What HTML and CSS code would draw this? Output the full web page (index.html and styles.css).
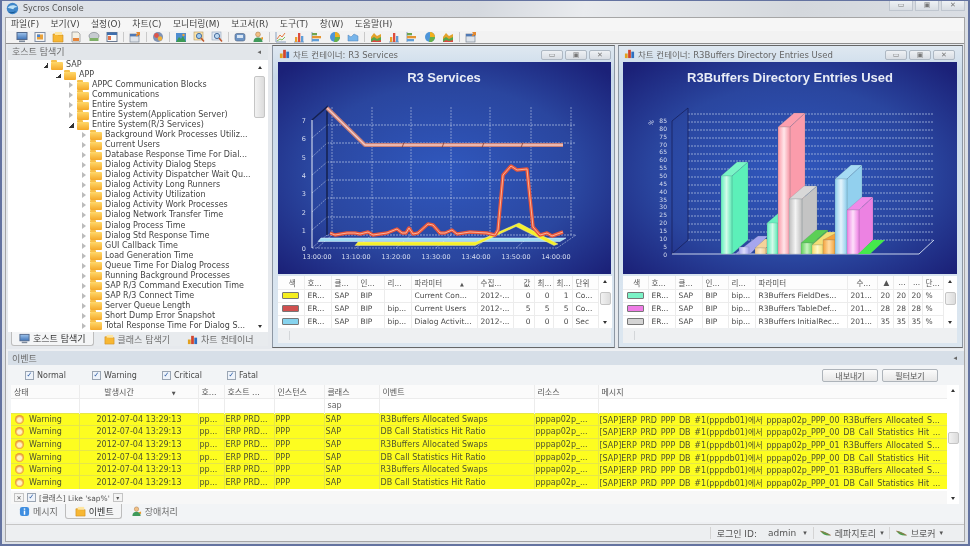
FILE: index.html
```html
<!DOCTYPE html>
<html lang="ko">
<head>
<meta charset="utf-8">
<title>Sycros Console</title>
<link rel="stylesheet" href="styles.css">
</head>
<body>
<svg class="defs" width="0" height="0">
  <defs>
    <linearGradient id="gBlue" x1="0" y1="0" x2="0" y2="1"><stop offset="0" stop-color="#9fc4ec"/><stop offset="1" stop-color="#3f74b8"/></linearGradient>
    <symbol id="i-mon" viewBox="0 0 12 12"><rect x="1" y="1.5" width="10" height="7" fill="url(#gBlue)" stroke="#52698c"/><rect x="3" y="9.5" width="6" height="1.6" fill="#7d8a9b"/></symbol>
    <symbol id="i-win" viewBox="0 0 12 12"><rect x="1" y="1.5" width="10" height="9" fill="#f5f5f5" stroke="#7f8da3"/><rect x="3" y="3.5" width="6" height="5" fill="#e8a23c"/><rect x="3" y="3.5" width="3" height="2.5" fill="#4c86cf"/></symbol>
    <symbol id="i-fold" viewBox="0 0 12 12"><path d="M1 3h4l1 1h5v7H1z" fill="#f7b733" stroke="#c98a1c" stroke-width=".6"/><path d="M3 1h7v3H3z" fill="#ffe6a0"/></symbol>
    <symbol id="i-doc" viewBox="0 0 12 12"><path d="M2 1h6l2 2v8H2z" fill="#f3f0e4" stroke="#8c8c8c" stroke-width=".7"/><path d="M3 7h6v3H3z" fill="#e6853a"/></symbol>
    <symbol id="i-drive" viewBox="0 0 12 12"><ellipse cx="6" cy="5" rx="5" ry="3.6" fill="#c7cbd1" stroke="#7f858e" stroke-width=".7"/><rect x="1.5" y="7" width="9" height="3" fill="#7fb069"/></symbol>
    <symbol id="i-tab" viewBox="0 0 12 12"><rect x="1" y="1.5" width="10" height="9" fill="#fafafa" stroke="#6b7a91"/><rect x="1" y="1.5" width="10" height="2.5" fill="#3f6fae"/><rect x="2" y="5" width="3" height="4" fill="#e0714a"/></symbol>
    <symbol id="i-open" viewBox="0 0 12 12"><rect x="1" y="3" width="9" height="8" fill="#dfe4ea" stroke="#7c8796" stroke-width=".7"/><rect x="1" y="3" width="9" height="2.4" fill="#4f79b4"/><path d="M7 1l4 0 0 4-1.2-1.2L8 5.5 6.6 4.2l1.7-1.8z" fill="#e6892d"/></symbol>
    <symbol id="i-gear" viewBox="0 0 12 12"><circle cx="6" cy="6" r="5" fill="#7f93b5"/><circle cx="4.5" cy="4.5" r="2.4" fill="#e0564a"/><circle cx="8" cy="7.5" r="2.2" fill="#f2b13b"/></symbol>
    <symbol id="i-mount" viewBox="0 0 12 12"><rect x="1" y="2" width="10" height="9" fill="#4f8ed0"/><path d="M1 11l3-5 2 2 2-3 3 6z" fill="#3c9a55"/><circle cx="8.5" cy="4" r="1.2" fill="#f0a33a"/></symbol>
    <symbol id="i-zoom" viewBox="0 0 12 12"><rect x="1" y="1" width="9" height="8" fill="#fbe3a9" stroke="#b59b66" stroke-width=".6"/><circle cx="6" cy="5" r="2.6" fill="#9ecbf0" stroke="#4b6f9c"/><path d="M8 7l3 3.4" stroke="#c2572c" stroke-width="1.5"/></symbol>
    <symbol id="i-zoom2" viewBox="0 0 12 12"><rect x="1" y="1" width="9" height="8" fill="#dce6f3" stroke="#93a3b8" stroke-width=".6"/><circle cx="6" cy="5" r="2.6" fill="#bcd8f3" stroke="#4b6f9c"/><path d="M8 7l3 3.4" stroke="#c2572c" stroke-width="1.5"/></symbol>
    <symbol id="i-disk" viewBox="0 0 12 12"><rect x="1" y="2.5" width="10" height="7.5" rx="2" fill="#6d94c4" stroke="#4a5f80" stroke-width=".6"/><rect x="3" y="4" width="6" height="3" fill="#d8e6f5"/></symbol>
    <symbol id="i-info" viewBox="0 0 12 12"><rect x="1" y="1" width="10" height="10" rx="2.500" fill="#3f8ee0"/><rect x="5.200" y="5" width="1.600" height="4.500" fill="#fff"/><rect x="5.200" y="2.600" width="1.600" height="1.500" fill="#fff"/></symbol>
    <symbol id="i-user" viewBox="0 0 12 12"><circle cx="6" cy="3.4" r="2.4" fill="#f2c085" stroke="#a5713a" stroke-width=".5"/><path d="M1.5 11c0-3.4 2-4.6 4.5-4.6s4.500 1.200 4.500 4.600z" fill="#3f9a5b"/><path d="M8 7l3-1v3z" fill="#e69a2c"/></symbol>
    <symbol id="i-line" viewBox="0 0 12 12"><path d="M1 1v10h10" fill="none" stroke="#8aa0bf"/><path d="M2 8l3-4 2 2 3-4" fill="none" stroke="#e5793f"/><path d="M2 10l3-2 2 1 3-3" fill="none" stroke="#7fc05a"/></symbol>
    <symbol id="i-bar" viewBox="0 0 12 12"><path d="M1 11h10" stroke="#8aa0bf"/><rect x="2" y="6" width="2.300" height="5" fill="#eb9e2b"/><rect x="5" y="2" width="2.300" height="9" fill="#dd4c3d"/><rect x="8" y="5" width="2.300" height="6" fill="#5f9ed8"/></symbol>
    <symbol id="i-hbar" viewBox="0 0 12 12"><path d="M1 1v10" stroke="#8aa0bf"/><rect x="1" y="2" width="5" height="2.300" fill="#6ea54f"/><rect x="1" y="5" width="9" height="2.300" fill="#e59431"/><rect x="1" y="8" width="7" height="2.300" fill="#5f9ed8"/></symbol>
    <symbol id="i-pie" viewBox="0 0 12 12"><circle cx="6" cy="6" r="5" fill="#4d95d9"/><path d="M6 6V1a5 5 0 0 1 5 5z" fill="#f2b01e"/><path d="M6 6h5a5 5 0 0 1-6 5z" fill="#67b24a"/></symbol>
    <symbol id="i-area" viewBox="0 0 12 12"><path d="M1 10V4l3 2 3-3 4 2v5z" fill="#78b5ea" stroke="#4b7fb7" stroke-width=".5"/></symbol>
    <symbol id="i-area2" viewBox="0 0 12 12"><path d="M1 11V6l3-4 3 3 4-2v8z" fill="#e3a22b"/><path d="M1 11V8l3-2 3 2 4-2v5z" fill="#55a64b"/><path d="M1 11l3-2 3 1 4-1v2z" fill="#d94a43"/></symbol>
    <symbol id="i-app" viewBox="0 0 16 16"><circle cx="8" cy="8" r="7" fill="#3f86c9"/><path d="M2 7c3-4 9-4 12-1-3 0-4 1-5 3-2-1-4-1-7-2z" fill="#bfe3f7"/><path d="M3 12c3 1 6 1 9-1-1 3-7 4-9 1z" fill="#16568f"/></symbol>
    <symbol id="i-leaf" viewBox="0 0 14 8"><path d="M1 1c4 0 8 2 12 5-5 1-9-1-12-5z" fill="#48a04b"/><path d="M1 1c4 2 8 3 12 5" stroke="#c65a4a" stroke-width=".7" fill="none"/></symbol>
    <symbol id="i-chart" viewBox="0 0 12 12"><rect x="1" y="6" width="3" height="5" fill="#e2a11f"/><rect x="4.500" y="2" width="3" height="9" fill="#d2452f"/><rect x="8" y="4" width="3" height="7" fill="#2f6fc0"/></symbol>
    <radialGradient id="bg1" cx=".5" cy=".52" r=".68"><stop offset="0" stop-color="#3058be"/><stop offset=".6" stop-color="#2a469f"/><stop offset="1" stop-color="#1b2178"/></radialGradient>
    <linearGradient id="mint" x1="0" x2="1" y1="0" y2="0"><stop offset="0" stop-color="#5ff0bd"/><stop offset=".5" stop-color="#d3fbe9"/><stop offset="1" stop-color="#59e8b3"/></linearGradient>
    <linearGradient id="pink" x1="0" x2="1" y1="0" y2="0"><stop offset="0" stop-color="#fb98a6"/><stop offset=".5" stop-color="#ffe6ea"/><stop offset="1" stop-color="#f894a3"/></linearGradient>
    <linearGradient id="grey" x1="0" x2="1" y1="0" y2="0"><stop offset="0" stop-color="#bdbdbd"/><stop offset=".5" stop-color="#f4f4f4"/><stop offset="1" stop-color="#bdbdbd"/></linearGradient>
    <linearGradient id="blue" x1="0" x2="1" y1="0" y2="0"><stop offset="0" stop-color="#8ccdec"/><stop offset=".5" stop-color="#e3f4fc"/><stop offset="1" stop-color="#8ccdec"/></linearGradient>
    <linearGradient id="mag" x1="0" x2="1" y1="0" y2="0"><stop offset="0" stop-color="#ee7fe4"/><stop offset=".5" stop-color="#fde0fa"/><stop offset="1" stop-color="#ee7fe4"/></linearGradient>
    <linearGradient id="grn" x1="0" x2="1" y1="0" y2="0"><stop offset="0" stop-color="#5fd059"/><stop offset=".5" stop-color="#c9f3c1"/><stop offset="1" stop-color="#5fd059"/></linearGradient>
    <linearGradient id="yel" x1="0" x2="1" y1="0" y2="0"><stop offset="0" stop-color="#f6dc6b"/><stop offset=".5" stop-color="#fff8c8"/><stop offset="1" stop-color="#f6dc6b"/></linearGradient>
    <linearGradient id="org" x1="0" x2="1" y1="0" y2="0"><stop offset="0" stop-color="#f4a33c"/><stop offset=".5" stop-color="#ffdca4"/><stop offset="1" stop-color="#f4a33c"/></linearGradient>
    <linearGradient id="pale" x1="0" x2="1" y1="0" y2="0"><stop offset="0" stop-color="#f0c98a"/><stop offset=".5" stop-color="#fbe8c6"/><stop offset="1" stop-color="#f0c98a"/></linearGradient>
    <linearGradient id="lav" x1="0" x2="1" y1="0" y2="0"><stop offset="0" stop-color="#a6a6ee"/><stop offset=".5" stop-color="#dcdcfa"/><stop offset="1" stop-color="#a6a6ee"/></linearGradient>
  </defs>
</svg>

<div class="app">
  <header class="titlebar">
    <div class="app-title"><svg class="ico-app"><use href="#i-app"/></svg><span>Sycros Console</span></div>
    <div class="winctl main-ctl"><span class="wb">▭</span><span class="wb">▣</span><span class="wb">✕</span></div>
  </header>

  <div class="frame">
    <nav class="menubar">
      <span>파일(F)</span><span>보기(V)</span><span>설정(O)</span><span>차트(C)</span><span>모니터링(M)</span><span>보고서(R)</span><span>도구(T)</span><span>창(W)</span><span>도움말(H)</span>
    </nav>
    <div class="toolbar">
      <svg class="ti"><use href="#i-mon"/></svg><svg class="ti"><use href="#i-win"/></svg><svg class="ti"><use href="#i-fold"/></svg><svg class="ti"><use href="#i-doc"/></svg><svg class="ti"><use href="#i-drive"/></svg><svg class="ti"><use href="#i-tab"/></svg>
      <i class="tsep"></i><svg class="ti"><use href="#i-open"/></svg>
      <i class="tsep"></i><svg class="ti"><use href="#i-gear"/></svg>
      <i class="tsep"></i><svg class="ti"><use href="#i-mount"/></svg><svg class="ti"><use href="#i-zoom"/></svg><svg class="ti"><use href="#i-zoom2"/></svg>
      <i class="tsep"></i><svg class="ti"><use href="#i-disk"/></svg><svg class="ti"><use href="#i-user"/></svg>
      <i class="tsep"></i><svg class="ti"><use href="#i-line"/></svg><svg class="ti"><use href="#i-bar"/></svg><svg class="ti"><use href="#i-hbar"/></svg><svg class="ti"><use href="#i-pie"/></svg><svg class="ti"><use href="#i-area"/></svg>
      <i class="tsep"></i><svg class="ti"><use href="#i-area2"/></svg><svg class="ti"><use href="#i-bar"/></svg><svg class="ti"><use href="#i-hbar"/></svg><svg class="ti"><use href="#i-pie"/></svg><svg class="ti"><use href="#i-area2"/></svg>
      <i class="tsep"></i><svg class="ti"><use href="#i-open"/></svg>
    </div>

    <div class="main">
      <aside class="explorer">
        <div class="panel-head"><span>호스트 탐색기</span><span class="pin">◂</span></div>
        <div class="tree-wrap">
          <ul class="tree">
            <li class="l0"><i class="tw open"></i><i class="folder"></i>SAP</li>
            <li class="l1"><i class="tw open"></i><i class="folder"></i>APP</li>
            <li class="l2"><i class="tw"></i><i class="folder"></i>APPC Communication Blocks</li>
            <li class="l2"><i class="tw"></i><i class="folder"></i>Communications</li>
            <li class="l2"><i class="tw"></i><i class="folder"></i>Entire System</li>
            <li class="l2"><i class="tw"></i><i class="folder"></i>Entire System(Application Server)</li>
            <li class="l2"><i class="tw open"></i><i class="folder"></i>Entire System(R/3 Services)</li>
            <li class="l3"><i class="tw"></i><i class="folder"></i>Background Work Processes Utiliz...</li>
            <li class="l3"><i class="tw"></i><i class="folder"></i>Current Users</li>
            <li class="l3"><i class="tw"></i><i class="folder"></i>Database Response Time For Dial...</li>
            <li class="l3"><i class="tw"></i><i class="folder"></i>Dialog Activity Dialog Steps</li>
            <li class="l3"><i class="tw"></i><i class="folder"></i>Dialog Activity Dispatcher Wait Qu...</li>
            <li class="l3"><i class="tw"></i><i class="folder"></i>Dialog Activity Long Runners</li>
            <li class="l3"><i class="tw"></i><i class="folder"></i>Dialog Activity Utilization</li>
            <li class="l3"><i class="tw"></i><i class="folder"></i>Dialog Activity Work Processes</li>
            <li class="l3"><i class="tw"></i><i class="folder"></i>Dialog Network Transfer Time</li>
            <li class="l3"><i class="tw"></i><i class="folder"></i>Dialog Process Time</li>
            <li class="l3"><i class="tw"></i><i class="folder"></i>Dialog Std Response Time</li>
            <li class="l3"><i class="tw"></i><i class="folder"></i>GUI Callback Time</li>
            <li class="l3"><i class="tw"></i><i class="folder"></i>Load Generation Time</li>
            <li class="l3"><i class="tw"></i><i class="folder"></i>Queue Time For Dialog Process</li>
            <li class="l3"><i class="tw"></i><i class="folder"></i>Running Background Processes</li>
            <li class="l3"><i class="tw"></i><i class="folder"></i>SAP R/3 Command Execution Time</li>
            <li class="l3"><i class="tw"></i><i class="folder"></i>SAP R/3 Connect Time</li>
            <li class="l3"><i class="tw"></i><i class="folder"></i>Server Queue Length</li>
            <li class="l3"><i class="tw"></i><i class="folder"></i>Short Dump Error Snapshot</li>
            <li class="l3"><i class="tw"></i><i class="folder"></i>Total Response Time For Dialog S...</li>
          </ul>
          <div class="sb sb-tree"><i class="up"></i><b class="thumb"></b><i class="down"></i></div>
        </div>
        <div class="tabs host-tabs">
          <span class="tab active"><svg class="tabi"><use href="#i-mon"/></svg>호스트 탐색기</span>
          <span class="tab"><svg class="tabi"><use href="#i-fold"/></svg>클래스 탐색기</span>
          <span class="tab"><svg class="tabi"><use href="#i-chart"/></svg>차트 컨테이너</span>
        </div>
      </aside>

      <section class="cwin cw1">
        <div class="cwin-title"><span class="ct"><svg class="ci"><use href="#i-chart"/></svg>차트 컨테이너: R3 Services</span><div class="winctl"><span class="wb">▭</span><span class="wb">▣</span><span class="wb">✕</span></div></div>
        <svg class="chart" viewBox="278 62 333 212">
          <rect x="278" y="62" width="333" height="212" fill="url(#bg1)"/>
          <text x="444" y="82" class="ctitle">R3 Services</text>
          <g class="grid-h">
            <path d="M327 125H576M327 143H576M327 162H576M327 180H576M327 198H576M327 217H576M327 235H576"/>
          </g>
          <g class="grid-v">
            <path d="M332 107V235M372 107V235M411 107V235M451 107V235M490 107V235M531 107V235M571 107V235"/>
            <path d="M312 138L327 125M312 157L327 143M312 175L327 162M312 193L327 180M312 212L327 198M312 230L327 217M312 248L327 235"/>
            <path d="M557 248L576 235M317 248L332 235M356 248L372 235M396 248L411 235M436 248L451 235M476 248L490 235M516 248L531 235"/>
            <path d="M312 248H557"/>
          </g>
          <path d="M312 120L327 107V235" class="wall"/>
          <path d="M312 120V248" class="axis"/>
          <g class="ylab"><text x="306" y="123">7</text><text x="306" y="141">6</text><text x="306" y="160">5</text><text x="306" y="178">4</text><text x="306" y="196">3</text><text x="306" y="215">2</text><text x="306" y="233">1</text><text x="306" y="251">0</text></g>
          <g class="xlab"><text x="317" y="259">13:00:00</text><text x="356" y="259">13:10:00</text><text x="396" y="259">13:20:00</text><text x="436" y="259">13:30:00</text><text x="476" y="259">13:40:00</text><text x="516" y="259">13:50:00</text><text x="556" y="259">14:00:00</text></g>
          <path d="M321 238H566L560 241.500H318z" fill="#9fdcf3" stroke="#e8f8ff" stroke-width=".5"/>
          <path d="M358 242H476L519 223L558 244L554 245.500L516 226.500L475 245.500H355z" fill="#f5f02c" stroke="#fffbb0" stroke-width=".4"/>
          <polyline class="ln-o" points="330,233 335,235 347,233 355,233 360,234 368,232 373,235 387,233 397,229 402,233 406,233 409,228 413,234 418,233 428,224 433,225 440,233 445,233 452,230 457,234 470,232 487,233 495,235 498,230 503,175 511,166 517,170 527,169 533,227 540,235 547,233 552,236 563,232"/>
          <polyline class="ln-o2" points="330,233 335,235 347,233 355,233 360,234 368,232 373,235 387,233 397,229 402,233 406,233 409,228 413,234 418,233 428,224 433,225 440,233 445,233 452,230 457,234 470,232 487,233 495,235 498,230 503,175 511,166 517,170 527,169 533,227 540,235 547,233 552,236 563,232"/>
          <polyline class="ln-p" points="327,108 365,145 563,145"/>
          <polyline class="ln-p2" points="327,108 365,145 563,145"/>
          <path d="M404 142.500l-2 5M444 142.500l-2 5M484 142.500l-2 5M523 142.500l-2 5" stroke="#7a3a3a" stroke-width=".8"/>
        </svg>
        <div class="dt">
          <table class="grid t1">
            <colgroup><col><col><col><col><col><col><col><col><col><col><col></colgroup>
            <thead><tr><th class="ctr">색</th><th>호...</th><th>클...</th><th>인...</th><th>리...</th><th>파라미터<span class="sort">▲</span></th><th>수집...</th><th class="r">값</th><th>최...</th><th>최...</th><th>단위</th></tr></thead>
            <tbody>
              <tr><td><i class="swatch s-yel"></i></td><td>ER...</td><td>SAP</td><td>BIP</td><td></td><td>Current Con...</td><td>2012-...</td><td class="r">0</td><td class="r">0</td><td class="r">1</td><td>Co...</td></tr>
              <tr><td><i class="swatch s-red"></i></td><td>ER...</td><td>SAP</td><td>BIP</td><td>bip...</td><td>Current Users</td><td>2012-...</td><td class="r">5</td><td class="r">5</td><td class="r">5</td><td>Co...</td></tr>
              <tr><td><i class="swatch s-blu"></i></td><td>ER...</td><td>SAP</td><td>BIP</td><td>bip...</td><td>Dialog Activit...</td><td>2012-...</td><td class="r">0</td><td class="r">0</td><td class="r">0</td><td>Sec</td></tr>
            </tbody>
          </table>
          <div class="sb sb-mini"><i class="up"></i><b class="thumb"></b><i class="down"></i></div>
        </div>
        <div class="cwin-foot"><i></i></div>
      </section>

      <section class="cwin cw2">
        <div class="cwin-title"><span class="ct"><svg class="ci"><use href="#i-chart"/></svg>차트 컨테이너: R3Buffers Directory Entries Used</span><div class="winctl"><span class="wb">▭</span><span class="wb">▣</span><span class="wb">✕</span></div></div>
        <svg class="chart" viewBox="623 62 334 212">
          <rect x="623" y="62" width="334" height="212" fill="url(#bg1)"/>
          <text x="790" y="82" class="ctitle">R3Buffers Directory Entries Used</text>
          <path d="M688 114H934M688 122H934M688 130H934M688 138H934M688 146H934M688 154H934M688 161H934M688 169H934M688 177H934M688 185H934M688 193H934M688 201H934M688 209H934M688 216H934M688 224H934M688 232H934M688 240H934" class="grid-d"/>
          <path d="M672 121L688 108V240L672 254z" class="wall2"/>
          <path d="M672 254H919L934 240" class="floor"/>
          <g class="ylab2">
            <text x="667" y="123">85</text><text x="667" y="131">80</text><text x="667" y="139">75</text><text x="667" y="147">70</text><text x="667" y="154">65</text><text x="667" y="162">60</text><text x="667" y="170">55</text><text x="667" y="178">50</text><text x="667" y="186">45</text><text x="667" y="194">40</text><text x="667" y="202">35</text><text x="667" y="209">30</text><text x="667" y="217">25</text><text x="667" y="225">20</text><text x="667" y="233">15</text><text x="667" y="241">10</text><text x="667" y="249">5</text><text x="667" y="257">0</text>
          </g>
          <text class="pct" transform="translate(652 126) rotate(-65)">%</text>

          <g class="bar"><polygon points="721,176 737,162 748,162 732,176" fill="#7af5c6"/><polygon points="732,176 748,162 748,240 732,254" fill="#5cf0b9"/><rect x="721" y="176" width="11" height="78" fill="url(#mint)"/></g>
          <g class="bar"><polygon points="735,254 745,246 758,236 768,236 750,254" fill="#a6a6ee"/><rect x="739" y="247" width="10" height="7" fill="url(#lav)"/></g>
          <g class="bar"><polygon points="755,248 765,239 775,239 766,248" fill="#f5d39a"/><rect x="755" y="248" width="11" height="6" fill="url(#pale)"/><polygon points="766,248 775,239 775,244 766,254" fill="#f0c98a"/></g>
          <g class="bar"><polygon points="767,223 782,210 782,254 767,254" fill="#6af0bf"/><rect x="767" y="223" width="11" height="31" fill="url(#mint)"/></g>
          <g class="bar"><polygon points="778,127 794,113 805,113 790,127" fill="#fb9fae"/><polygon points="790,127 805,113 805,240 790,254" fill="#fb9cab"/><rect x="778" y="127" width="12" height="127" fill="url(#pink)"/></g>
          <g class="bar"><polygon points="789,199 804,186 817,186 802,199" fill="#d8d8d8"/><polygon points="802,199 817,186 817,240 802,254" fill="#c4c4c4"/><rect x="789" y="199" width="13" height="55" fill="url(#grey)"/></g>
          <g class="bar"><polygon points="801,243 816,230 828,230 813,243" fill="#5ccf56"/><polygon points="813,243 828,230 828,240 813,254" fill="#57c451"/><rect x="801" y="243" width="12" height="11" fill="url(#grn)"/></g>
          <g class="bar"><polygon points="812,245 827,232 838,232 823,245" fill="#f4de77"/><rect x="812" y="245" width="11" height="9" fill="url(#yel)"/></g>
          <g class="bar"><polygon points="823,240 838,232 847,232 835,240" fill="#f4a33c"/><polygon points="835,240 847,232 847,244 835,254" fill="#f0a039"/><rect x="823" y="240" width="12" height="14" fill="url(#org)"/></g>
          <g class="bar"><polygon points="835,179 851,165 862,165 847,179" fill="#a6dbf3"/><polygon points="847,179 862,165 862,240 847,254" fill="#92d0ee"/><rect x="835" y="179" width="12" height="75" fill="url(#blue)"/></g>
          <g class="bar"><polygon points="847,210 862,197 873,197 859,210" fill="#f08ae8"/><polygon points="859,210 873,197 873,240 859,254" fill="#ec82e2"/><rect x="847" y="210" width="12" height="44" fill="url(#mag)"/></g>
          <polygon points="858,254 873,240 885,240 870,254" fill="#45e84c"/>
        </svg>
        <div class="dt">
          <table class="grid t2">
            <colgroup><col><col><col><col><col><col><col><col><col><col><col></colgroup>
            <thead><tr><th class="ctr">색</th><th>호...</th><th>클...</th><th>인...</th><th>리...</th><th>파라미터</th><th class="ctr">수...</th><th class="ctr">▲</th><th class="ctr">...</th><th class="ctr">...</th><th>단...</th></tr></thead>
            <tbody>
              <tr><td><i class="swatch s-min"></i></td><td>ER...</td><td>SAP</td><td>BIP</td><td>bip...</td><td>R3Buffers FieldDes...</td><td>201...</td><td class="r">20</td><td class="r">20</td><td class="r">20</td><td>%</td></tr>
              <tr><td><i class="swatch s-mag"></i></td><td>ER...</td><td>SAP</td><td>BIP</td><td>bip...</td><td>R3Buffers TableDef...</td><td>201...</td><td class="r">28</td><td class="r">28</td><td class="r">28</td><td>%</td></tr>
              <tr><td><i class="swatch s-gry"></i></td><td>ER...</td><td>SAP</td><td>BIP</td><td>bip...</td><td>R3Buffers InitialRec...</td><td>201...</td><td class="r">35</td><td class="r">35</td><td class="r">35</td><td>%</td></tr>
            </tbody>
          </table>
          <div class="sb sb-mini"><i class="up"></i><b class="thumb"></b><i class="down"></i></div>
        </div>
        <div class="cwin-foot"><i></i></div>
      </section>
    </div>

    <section class="events">
      <div class="panel-head ev-head"><span>이벤트</span><span class="pin">◂</span></div>
      <div class="ev-filter">
        <div class="checks">
          <label class="chk c-n"><i class="cb">✓</i>Normal</label>
          <label class="chk c-w"><i class="cb">✓</i>Warning</label>
          <label class="chk c-c"><i class="cb">✓</i>Critical</label>
          <label class="chk"><i class="cb">✓</i>Fatal</label>
        </div>
        <div class="btns"><button class="btn">내보내기</button><button class="btn">필터보기</button></div>
      </div>
      <div class="ev-body">
        <div class="ev-tablewrap">
          <table class="grid ev">
            <colgroup><col><col><col><col><col><col><col><col><col></colgroup>
            <thead>
              <tr><th>상태</th><th class="ctr">발생시간<span class="sort">▼</span></th><th>호...</th><th>호스트 ...</th><th>인스턴스</th><th>클래스</th><th>이벤트</th><th>리소스</th><th>메시지</th></tr>
              <tr class="fr"><td></td><td></td><td></td><td></td><td></td><td>sap</td><td></td><td></td><td></td></tr>
            </thead>
            <tbody>
              <tr><td><i class="warn"></i>Warning</td><td class="ctr">2012-07-04 13:29:13</td><td>pp...</td><td>ERP PRD...</td><td>PPP</td><td>SAP</td><td>R3Buffers Allocated Swaps</td><td>pppap02p_...</td><td class="msg">[SAP]ERP PRD PPP DB #1(pppdb01)에서 pppap02p_PPP_00 R3Buffers Allocated S...</td></tr>
              <tr><td><i class="warn"></i>Warning</td><td class="ctr">2012-07-04 13:29:13</td><td>pp...</td><td>ERP PRD...</td><td>PPP</td><td>SAP</td><td>DB Call Statistics Hit Ratio</td><td>pppap02p_...</td><td class="msg">[SAP]ERP PRD PPP DB #1(pppdb01)에서 pppap02p_PPP_00 DB Call Statistics Hit ...</td></tr>
              <tr><td><i class="warn"></i>Warning</td><td class="ctr">2012-07-04 13:29:13</td><td>pp...</td><td>ERP PRD...</td><td>PPP</td><td>SAP</td><td>R3Buffers Allocated Swaps</td><td>pppap02p_...</td><td class="msg">[SAP]ERP PRD PPP DB #1(pppdb01)에서 pppap02p_PPP_01 R3Buffers Allocated S...</td></tr>
              <tr><td><i class="warn"></i>Warning</td><td class="ctr">2012-07-04 13:29:13</td><td>pp...</td><td>ERP PRD...</td><td>PPP</td><td>SAP</td><td>DB Call Statistics Hit Ratio</td><td>pppap02p_...</td><td class="msg">[SAP]ERP PRD PPP DB #1(pppdb01)에서 pppap02p_PPP_00 DB Call Statistics Hit ...</td></tr>
              <tr><td><i class="warn"></i>Warning</td><td class="ctr">2012-07-04 13:29:13</td><td>pp...</td><td>ERP PRD...</td><td>PPP</td><td>SAP</td><td>R3Buffers Allocated Swaps</td><td>pppap02p_...</td><td class="msg">[SAP]ERP PRD PPP DB #1(pppdb01)에서 pppap02p_PPP_01 R3Buffers Allocated S...</td></tr>
              <tr><td><i class="warn"></i>Warning</td><td class="ctr">2012-07-04 13:29:13</td><td>pp...</td><td>ERP PRD...</td><td>PPP</td><td>SAP</td><td>DB Call Statistics Hit Ratio</td><td>pppap02p_...</td><td class="msg">[SAP]ERP PRD PPP DB #1(pppdb01)에서 pppap02p_PPP_01 DB Call Statistics Hit ...</td></tr>
            </tbody>
          </table>
          <div class="ev-expr"><span class="xbox">✕</span><i class="cb">✓</i><span>[클래스] Like 'sap%'</span><span class="dd">▾</span></div>
        </div>
        <div class="sb sb-ev"><i class="up"></i><b class="thumb"></b><i class="down"></i></div>
      </div>
      <div class="tabs ev-tabs">
        <span class="tab"><svg class="tabi"><use href="#i-info"/></svg>메시지</span>
        <span class="tab active"><svg class="tabi"><use href="#i-fold"/></svg>이벤트</span>
        <span class="tab"><svg class="tabi"><use href="#i-user"/></svg>장애처리</span>
      </div>
    </section>

    <footer class="status">
      <span class="st st-login">로그인 ID:<b>admin</b><em>▾</em></span>
      <span class="st"><svg class="leaf"><use href="#i-leaf"/></svg>레파지토리<em>▾</em></span>
      <span class="st"><svg class="leaf"><use href="#i-leaf"/></svg>브로커<em>▾</em></span>
    </footer>
  </div>
</div>
</body>
</html>
```

FILE: styles.css
```css
* { box-sizing: border-box; }
html, body { margin: 0; padding: 0; }
body {
  width: 970px; height: 546px; overflow: hidden; background: #fff;
  font-family: "DejaVu Sans", "Noto Sans CJK KR", sans-serif;
  font-size: 8px; color: #3a3a3a;
}
.defs { position: absolute; }
.app {
  width: 970px; height: 546px;
  display: flex; flex-direction: column;
  padding: 0 3px 2px;
  border: 2px solid #6473a0;
  border-top-width: 1px;
  background: linear-gradient(100deg, #dfe3e9 0%, #d5d9df 45%, #e9ebee 55%, #d4d8dd 75%, #dde1e7 100%);
  filter: blur(.4px);
}
.titlebar { height: 16px; display: flex; justify-content: space-between; align-items: flex-start; flex: none; }
.app-title { display: flex; align-items: center; gap: 4px; height: 15px; color: #555; font-size: 8px; padding-left: 1px; }
.ico-app { width: 13px; height: 13px; }
.winctl { display: flex; gap: 2px; }
.wb {
  width: 24px; height: 10px; border: 1px solid #bfc6cf; border-top: 0;
  background: linear-gradient(#eef1f4, #d8dde3);
  font-size: 7px; line-height: 9px; text-align: center; color: #777;
}
.main-ctl { margin-right: 0; }

.frame {
  flex: 1; display: flex; flex-direction: column; min-height: 0;
  border: 1px solid #a6a6a6; background: #eef0f3;
}
.menubar {
  height: 13px; flex: none; display: flex; gap: 11.400px; padding-left: 5px;
  background: #f6f6f6; font-size: 8.800px; line-height: 12px; color: #444;
}
.toolbar {
  height: 13px; flex: none; display: flex; align-items: center; gap: 6px; padding-left: 10px;
  background: #f2f2f2; border-bottom: 1px solid #8f8f8f;
}
.ti { width: 12px; height: 12px; flex: none; }
.tsep { width: 1px; height: 10px; margin: 0 -1px; background: #c9c9c9; flex: none; }

.main { height: 305px; flex: none; display: flex; gap: 3px; padding: 1px 0 0 2px; background: #e6e9ed; }
.explorer { width: 260px; margin-right: 1px; display: flex; flex-direction: column; flex: none; }
.panel-head {
  height: 15px; flex: none; display: flex; justify-content: space-between; align-items: center;
  padding: 0 7px 2px 4px; background: #e2e6ea; color: #6b6b6b; font-size: 9px;
}
.pin { font-size: 7px; color: #666; }
.tree-wrap { height: 272px; flex: none; display: flex; background: #fff; padding: 0 2px 0 2px; }
.tree { list-style: none; margin: 0; padding: 0; flex: 1; overflow: hidden; }
.tree li { height: 10.040px; line-height: 10px; display: flex; align-items: center; white-space: nowrap; color: #444; }
.l0 { padding-left: 33px; }
.l1 { padding-left: 46px; }
.l2 { padding-left: 59px; }
.l3 { padding-left: 72px; }
.tw {
  width: 0; height: 0; flex: none; margin-right: 4px;
  border-left: 4px solid #bbb; border-top: 3px solid transparent; border-bottom: 3px solid transparent;
}
.tw.open {
  margin-right: 3px; margin-left: 0; border: 0; width: 5px; height: 5px;
  background: linear-gradient(135deg, transparent 50%, #333 50%);
}
.folder {
  position: relative; flex: none; width: 12px; height: 8px; margin-right: 3px; margin-top: 1px; border-radius: 1px;
  background: linear-gradient(#ffd86a, #f4a92a);
}
.folder::before {
  content: ""; position: absolute; left: 0; top: -2px; width: 6px; height: 2px;
  background: #f6c04a; border-radius: 1px 1px 0 0;
}
.sb { width: 13px; flex: none; display: flex; flex-direction: column; align-items: center; background: #fff; }
.sb .up, .sb .down { width: 0; height: 0; flex: none; border-left: 2.500px solid transparent; border-right: 2.500px solid transparent; margin: 4px 0; }
.sb .up { border-bottom: 3px solid #333; }
.sb .down { border-top: 3px solid #333; margin-top: auto; }
.thumb { display: block; border: 1px solid #c5c5c5; border-radius: 2px; background: linear-gradient(90deg, #f2f2f2, #dcdcdc); width: 11px; }
.sb-tree .thumb { height: 42px; margin-top: 3px; }
.sb-tree .up { margin-top: 6px; }
.sb-mini { width: 13px; }
.sb-mini .thumb { height: 13px; margin-top: 5px; }
.sb-ev { width: 12px; background: #fff; }
.sb-ev .thumb { height: 12px; margin-top: 36px; }

.tabs { display: flex; flex: none; font-size: 9px; color: #6c6c6c; }
.tab { display: flex; align-items: center; gap: 3px; padding: 0 7px; }
.tab.active { background: #f4f5f6; color: #333; border: 1px solid #bdbdbd; border-top: 0; border-radius: 0 0 3px 3px; }
.tabi { width: 11px; height: 11px; flex: none; }
.host-tabs { height: 14px; background: #e8ebee; padding-left: 3px; gap: 3px; }

.cwin {
  flex: none; height: 303px; display: flex; flex-direction: column;
  border: 1px solid #8d97a3; border-top-color: #666; border-bottom-color: #666;
  background: linear-gradient(#dfe8f1, #c8d9ea 10%, #dbe6f0 90%);
}
.cw1 { width: 343px; padding: 0 3px 0 5px; }
.cw2 { width: 345px; padding: 0 5px 0 4px; }
.cw2 .winctl { margin-right: 2px; }
.cw2 .ct { padding-left: 1px; }
.cw1 .ct { padding-left: 1px; }
.cwin-title { height: 16px; flex: none; display: flex; justify-content: space-between; align-items: flex-start; color: #666; font-size: 8.500px; }
.ct { display: flex; align-items: center; gap: 3px; height: 15px; }
.ci { width: 11px; height: 11px; }
.cwin-title .wb { width: 22px; height: 10px; border: 1px solid #aeb8c3; margin-top: 4px; border-radius: 2px; }
.chart { width: 100%; height: 212px; flex: none; display: block; border: 0; }
.ctitle { fill: #e8ecf6; font: bold 13px "Liberation Sans", sans-serif; text-anchor: middle; }
.grid-h path { stroke: #b9c8e6; stroke-width: .7; stroke-dasharray: 2 1; fill: none; }
.grid-v path { stroke: #b9c8e6; stroke-width: .6; stroke-dasharray: 2 1; fill: none; }
.wall { stroke: #15204f; stroke-width: 1.500; fill: none; }
.axis { stroke: #e6ecf8; stroke-width: 1; fill: none; }
.ylab text, .ylab2 text { fill: #d7def0; font: 6.500px "DejaVu Sans", sans-serif; text-anchor: end; }
.ylab2 text { font-size: 6px; }
.xlab text { fill: #d7def0; font: 6.500px "DejaVu Sans", sans-serif; text-anchor: middle; }
.pct { fill: #d7def0; font: 6px "DejaVu Sans", sans-serif; }
.ln-o { fill: none; stroke: #e8553a; stroke-width: 3.500; stroke-linejoin: round; }
.ln-o2 { fill: none; stroke: #fbb295; stroke-width: 1; stroke-linejoin: round; }
.ln-p { fill: none; stroke: #c98077; stroke-width: 4; stroke-linejoin: bevel; }
.ln-p2 { fill: none; stroke: #f6c9c2; stroke-width: 1.500; stroke-linejoin: bevel; }
.grid-d { stroke: #a9bbe0; stroke-width: .8; stroke-dasharray: 2 1; fill: none; }
.wall2 { fill: none; stroke: #16205a; stroke-width: .8; }
.floor { fill: none; stroke: #c7d2ea; stroke-width: 1; }
.bar polygon, .bar rect { stroke: rgba(80, 100, 110, .45); stroke-width: .4; }

.dt { height: 52px; margin-top: 2px; flex: none; display: flex; background: #fff; }
.grid { border-collapse: collapse; table-layout: fixed; font-size: 7.500px; color: #4a4a4a; background: #fff; }
.grid th { font-weight: normal; text-align: left; padding: 0 0 0 3px; height: 13px; white-space: nowrap; overflow: hidden; color: #555; background: #fdfdfd; border-right: 1px solid #ececec; position: relative; }
.grid td { height: 13px; padding: 0 0 0 3px; white-space: nowrap; overflow: hidden; border-right: 1px solid #ececec; border-top: 1px solid #ececec; }
.grid .r { text-align: right; padding-right: 3px; }
.grid .ctr { text-align: center; }
.sort { font-size: 5px; margin-left: 18px; }
.t1, .t2 { flex: none; height: 52px; }
.t1 { width: 320px; }
.t1 col:nth-child(1) { width: 26px; }
.t1 col:nth-child(2) { width: 27px; }
.t1 col:nth-child(3) { width: 26px; }
.t1 col:nth-child(4) { width: 27px; }
.t1 col:nth-child(5) { width: 27px; }
.t1 col:nth-child(6) { width: 66px; }
.t1 col:nth-child(7) { width: 36px; }
.t1 col:nth-child(8) { width: 21px; }
.t1 col:nth-child(9) { width: 19px; }
.t1 col:nth-child(10) { width: 19px; }
.t1 col:nth-child(11) { width: 26px; }
.t2 { width: 320px; }
.t2 col:nth-child(1) { width: 25px; }
.t2 col:nth-child(2) { width: 27px; }
.t2 col:nth-child(3) { width: 27px; }
.t2 col:nth-child(4) { width: 26px; }
.t2 col:nth-child(5) { width: 27px; }
.t2 col:nth-child(6) { width: 92px; }
.t2 col:nth-child(7) { width: 30px; }
.t2 col:nth-child(8) { width: 16px; }
.t2 col:nth-child(9) { width: 15px; }
.t2 col:nth-child(10) { width: 14px; }
.t2 col:nth-child(11) { width: 21px; }
.swatch { display: block; width: 17px; height: 7px; border: 1px solid #777; border-radius: 1px; margin-left: 1px; }
.s-yel { background: #f5ee1e; }
.s-red { background: #d0504f; }
.s-blu { background: #86d3ee; }
.s-min { background: #7cf3c7; }
.s-mag { background: #ef7ce6; }
.s-gry { background: #d4d4d4; }
.cwin-foot { height: 15px; flex: none; background: #eef0f2; padding: 3px 0 0 11px; }
.cwin-foot i { display: block; width: 1px; height: 9px; background: #d3d6d9; }

.events { flex: none; height: 171px; margin: 2px 0 0 2px; display: flex; flex-direction: column; background: #f2f4f6; }
.ev-head { height: 14px; background: #d7dfe8; padding-bottom: 0; }
.ev-filter { height: 20px; flex: none; display: flex; justify-content: space-between; align-items: center; padding: 0 26px 0 17px; }
.checks { display: flex; }
.chk { display: flex; align-items: center; gap: 3px; color: #4a4a4a; font-size: 8px; }
.c-n { width: 67px; }
.c-w { width: 70px; }
.c-c { width: 65px; }
.cb {
  display: inline-block; width: 9px; height: 9px; flex: none; border: 1px solid #9aa5b3;
  background: #eef3fa; color: #2f5fa8; font: bold 7px/7px "DejaVu Sans", sans-serif; text-align: center;
}
.btns { display: flex; gap: 4px; }
.btn {
  width: 56px; height: 13px; padding: 0; font: 8px "DejaVu Sans", "Noto Sans CJK KR", sans-serif; color: #555;
  background: linear-gradient(#fbfbfb, #e6e6e6); border: 1px solid #aeb4ba; border-radius: 2px;
}
.ev-body { display: flex; height: 119px; flex: none; margin: 0 5px 0 3px; background: #fff; }
.ev-tablewrap { width: 936px; flex: none; display: flex; flex-direction: column; }
.ev { width: 936px; flex: none; font-size: 8px; }
.ev col:nth-child(1) { width: 68px; }
.ev col:nth-child(2) { width: 119px; }
.ev col:nth-child(3) { width: 26px; }
.ev col:nth-child(4) { width: 50px; }
.ev col:nth-child(5) { width: 50px; }
.ev col:nth-child(6) { width: 55px; }
.ev col:nth-child(7) { width: 155px; }
.ev col:nth-child(8) { width: 64px; }
.ev col:nth-child(9) { width: 349px; }
.ev th { height: 13px; background: #fbfbfb; }
.ev .fr td { height: 15px; background: #fff; color: #666; }
.ev tbody td { height: 12.600px; background: #fdfd20; border-color: #e6e64a; color: #4e5230; padding-left: 1px; }
.ev tbody td:first-child { padding-left: 4px; }
.ev tbody .msg { word-spacing: 1.200px; }
.ev .sort { margin-left: 38px; }
.warn {
  display: inline-block; width: 9px; height: 9px; border-radius: 50%; margin-right: 5px; vertical-align: -2px;
  background: radial-gradient(circle at 50% 55%, #fff3c0 0 30%, #f2a742 55%, #c46d20 100%);
}
.ev-expr { margin-top: auto; height: 13px; flex: none; display: flex; align-items: center; gap: 3px; padding-left: 3px; font-size: 7.500px; color: #555; background: #f7f7f7; }
.xbox, .dd { width: 10px; height: 9px; border: 1px solid #c4c4c4; background: #f4f4f4; font-size: 6px; line-height: 7px; text-align: center; }
.ev-tabs { height: 15px; margin-left: 2px; }
.ev-tabs .tab { padding: 0 7px 0 9px; }
.status {
  flex: 1; display: flex; justify-content: flex-end; align-items: center; padding-right: 16px; font-size: 9px; color: #555;
  background: #edeff1; border-top: 1px solid #c6c6c6; margin-top: 2px;
}
.st { display: flex; align-items: center; gap: 3px; padding: 0 5px; border-left: 1px solid #d4d4d4; height: 12px; }
.st b { font-weight: normal; margin-left: 8px; }
.st em { font-style: normal; font-size: 7px; margin-left: 1px; }
.st-login { padding-left: 6px; padding-right: 6px; }
.st-login em { margin-left: 4px; }
.leaf { width: 13px; height: 7px; flex: none; }
```
